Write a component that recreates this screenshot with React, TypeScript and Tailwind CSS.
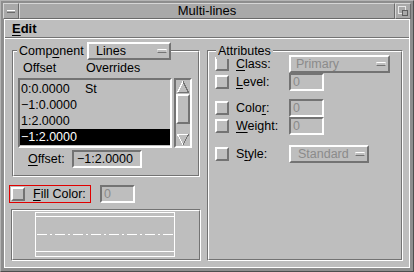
import React from 'react';

// motif style bevels
const raised = 'border-2 border-t-white border-l-white border-b-[#737373] border-r-[#737373]';
const sunken = 'border-2 border-t-[#737373] border-l-[#737373] border-b-white border-r-white';
const raised1 = 'border border-t-[#d6d6d6] border-l-[#d6d6d6] border-b-[#6a6a6a] border-r-[#6a6a6a]';
const etchOuter = 'border border-t-[#737373] border-l-[#737373] border-b-white border-r-white';
const etchInner = 'border border-t-white border-l-white border-b-[#737373] border-r-[#737373]';

function U({ children }: { children: React.ReactNode }) {
  return <span className="underline underline-offset-[2px] decoration-1">{children}</span>;
}

function Check() {
  return <div className={`w-[14px] h-[14px] shrink-0 bg-[#bebebe] ${raised}`} />;
}

function Indicator() {
  return <div className="w-[10px] h-[4px] border-t border-t-white border-b border-b-[#737373] bg-[#bebebe] border-x border-x-[#d0d0d0]" />;
}

function Field({ value, disabled, className }: { value: string; disabled?: boolean; className: string }) {
  return (
    <div className={`h-[18px] ${sunken} flex items-center pl-[1px] ${className} ${disabled ? 'text-[#8b8b8b]' : 'text-black'}`}>
      {value}
    </div>
  );
}

function OptionMenu({ label, disabled, className }: { label: string; disabled?: boolean; className: string }) {
  return (
    <div className={`h-[18px] bg-[#bebebe] ${raised} flex items-center justify-between ${className} ${disabled ? 'text-[#8b8b8b]' : 'text-black'}`}>
      <span>{label}</span>
      <Indicator />
    </div>
  );
}

function ArrowUp() {
  return (
    <svg width="14" height="14" viewBox="0 0 14 14" shapeRendering="crispEdges">
      <polyline points="1.5,12.5 7,1.5" stroke="#ffffff" strokeWidth="1" fill="none" />
      <polyline points="7,1.5 12.5,12.5 1.5,12.5" stroke="#737373" strokeWidth="1" fill="none" />
    </svg>
  );
}

function ArrowDown() {
  return (
    <svg width="14" height="13" viewBox="0 0 14 13" shapeRendering="crispEdges">
      <polyline points="12.5,1.5 1.5,1.5 7,11.5" stroke="#ffffff" strokeWidth="1" fill="none" />
      <polyline points="7,11.5 12.5,1.5" stroke="#737373" strokeWidth="1" fill="none" />
    </svg>
  );
}

const rows = [
  { off: '0:0.0000', ov: 'St' },
  { off: '\u22121:0.0000', ov: '' },
  { off: '1:2.0000', ov: '' },
  { off: '\u22121:2.0000', ov: '', sel: true },
];

function AttrRow({ label, children, className }: { label: React.ReactNode; children: React.ReactNode; className: string }) {
  return (
    <div className={`h-[18px] flex items-center pl-[6px] ${className}`}>
      <Check />
      <span className="ml-[7px] w-[53px]">{label}</span>
      {children}
    </div>
  );
}

export default function App() {
  return (
    <div className="w-[414px] h-[272px] bg-[#8e8e8e] border border-t-[#b4b4b4] border-l-[#b4b4b4] border-b-[#4e4e4e] border-r-[#4e4e4e] pt-[2px] px-[2px] pb-[3px] flex flex-col font-['Liberation_Sans',sans-serif] text-[12.5px] leading-[16px] text-black select-none">
      {/* title bar */}
      <div className="h-[16px] flex shrink-0">
        <div className={`w-[16px] h-[16px] bg-[#a9a9a9] ${raised1} flex items-center justify-center`}>
          <div className="w-[8px] h-[3px] border-t border-t-white border-b border-b-[#6a6a6a] bg-[#a9a9a9]" />
        </div>
        <div className={`flex-1 h-[16px] bg-[#a9a9a9] ${raised1} flex items-center justify-center text-[13px]`}>
          Multi-lines
        </div>
        <div className={`w-[16px] h-[16px] bg-[#a9a9a9] ${raised1} flex items-center justify-center`}>
          <svg width="12" height="12" viewBox="0 0 12 12" shapeRendering="crispEdges">
            <rect x="1.5" y="1.5" width="7" height="7" fill="none" stroke="#e8e8e8" />
            <rect x="5.5" y="5.5" width="5" height="5" fill="#a9a9a9" stroke="#5e5e5e" />
          </svg>
        </div>
      </div>

      {/* client */}
      <div className="flex-1 mx-[1px] bg-[#bebebe] border border-white flex flex-col">
        <div className="h-[18px] border-b border-b-[#737373] flex items-center pl-[7px] font-bold text-[13px]">
          <span><U>E</U>dit</span>
        </div>
        <div className="flex-1 border-t border-t-white flex pl-[4px] gap-[7px]">
          {/* left column */}
          <div className="w-[191px] flex flex-col">
            <div className={`relative mt-[11px] ml-[3px] w-[188px] h-[127px] ${etchOuter}`}>
              <div className={`w-full h-full ${etchInner} flex flex-col`}>
                <div className="h-[16px] mt-[8px] pl-[9px] flex">
                  <span className="w-[63px]">Offset</span>
                  <span>Overrides</span>
                </div>
                <div className="mt-[2px] pl-[4px] flex gap-[1px]">
                  <div className={`w-[154px] h-[70px] ${sunken} pt-[1px]`}>
                    {rows.map((r) => (
                      <div key={r.off} className={`h-[16px] flex items-center pl-[1px] ${r.sel ? 'bg-black text-white' : ''}`}>
                        <span className="w-[64px]">{r.off}</span>
                        <span>{r.ov}</span>
                      </div>
                    ))}
                  </div>
                  <div className={`ml-[1px] w-[18px] h-[70px] ${sunken} flex flex-col`}>
                    <div className="h-[14px] flex items-start justify-center">
                      <ArrowUp />
                    </div>
                    <div className={`h-[30px] ${raised}`} />
                    <div className="flex-1" />
                    <div className="h-[13px] flex items-end justify-center">
                      <ArrowDown />
                    </div>
                  </div>
                </div>
                <div className="mt-[2px] pl-[14px] flex items-center h-[18px]">
                  <span className="w-[44px]"><U>O</U>ffset:</span>
                  <Field value={'\u22121:2.0000'} className="w-[70px] pl-[3px]" />
                </div>
              </div>
              <div className="absolute left-[4px] top-[-9px] h-[17px] flex items-center bg-[#bebebe]">
                <span className="w-[70px] pl-[2px]">Comp<U>o</U>nent</span>
                <OptionMenu label="Lines" className="w-[84px] pl-[7px] pr-[2px]" />
              </div>
            </div>

            <div className="mt-[8px] flex items-center h-[18px]">
              <div className="w-[82px] h-[18px] border border-[#e00000] flex items-center pl-[1px]">
                <Check />
                <span className="ml-[8px]"><U>F</U>ill Color:</span>
              </div>
              <Field value="0" disabled className="ml-[9px] w-[35px] pl-[2px]" />
            </div>

            <div className={`mt-[6px] ml-[2px] w-[190px] h-[52px] ${etchOuter}`}>
              <div className={`w-full h-full ${etchInner}`}>
                <svg width="186" height="48" viewBox="0 0 186 48" shapeRendering="crispEdges">
                  <rect x="22.5" y="1.5" width="139" height="44" fill="none" stroke="#ffffff" />
                  <line x1="22" y1="5.5" x2="162" y2="5.5" stroke="#ffffff" />
                  <line x1="22" y1="40.5" x2="162" y2="40.5" stroke="#ffffff" />
                  <line x1="24" y1="23.5" x2="160" y2="23.5" stroke="#ffffff" strokeDasharray="10 3 2 3" />
                </svg>
              </div>
            </div>
          </div>

          {/* right column */}
          <div className="w-[196px] flex flex-col">
            <div className={`relative mt-[11px] w-[196px] h-[211px] ${etchOuter}`}>
              <div className={`w-full h-full ${etchInner} flex flex-col pt-[3px]`}>
                <AttrRow label={<><U>C</U>lass:</>} className="">
                  <OptionMenu label="Primary" disabled className="w-[101px] pl-[5px] pr-[2px]" />
                </AttrRow>
                <AttrRow label={<><U>L</U>evel:</>} className="">
                  <Field value="0" disabled className="w-[35px] pl-[2px]" />
                </AttrRow>
                <AttrRow label={<>Colo<U>r</U>:</>} className="mt-[8px]">
                  <Field value="0" disabled className="w-[35px] pl-[2px]" />
                </AttrRow>
                <AttrRow label={<><U>W</U>eight:</>} className="">
                  <Field value="0" disabled className="w-[35px] pl-[2px]" />
                </AttrRow>
                <AttrRow label={<>S<U>t</U>yle:</>} className="mt-[10px]">
                  <OptionMenu label="Standard" disabled className="w-[80px] pl-[7px] pr-[2px]" />
                </AttrRow>
              </div>
              <div className="absolute left-[8px] top-[-9px] h-[17px] flex items-center bg-[#bebebe] px-[2px]">
                Attributes
              </div>
            </div>
          </div>
        </div>
      </div>
    </div>
  );
}
